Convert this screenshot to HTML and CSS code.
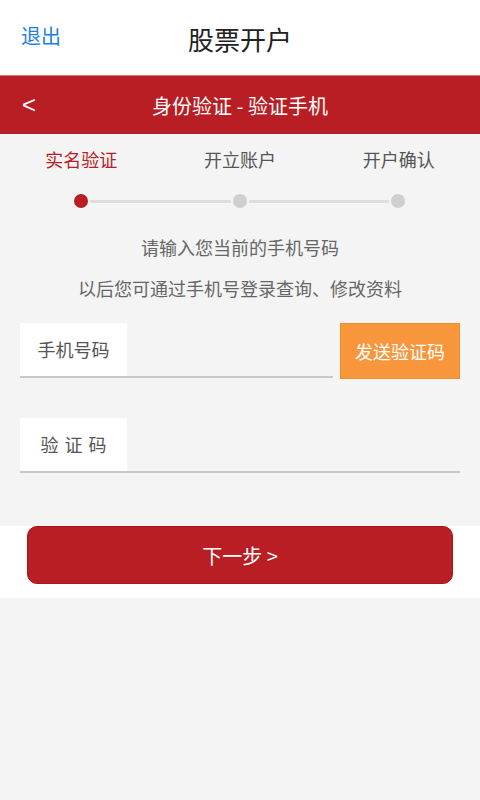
FILE: index.html
```html
<!DOCTYPE html>
<html lang="zh-CN">
<head>
  <meta charset="UTF-8" />
  <meta name="viewport" content="width=device-width, initial-scale=1.0"/>
  <title>股票开户</title>
  <link rel="stylesheet" href="styles.css">
</head>
<body>
  <header class="top-bar">
    <a class="exit">退出</a>
    <h1>股票开户</h1>
    <span></span>
  </header>

  <div class="nav-bar">
    <span class="back">&lt;</span>
    <h2>身份验证 - 验证手机</h2>
  </div>

  <div class="steps">
    <div class="step active">实名验证</div>
    <div class="step">开立账户</div>
    <div class="step">开户确认</div>
  </div>

  <div class="track">
    <span class="dot active"></span>
    <span class="line"></span>
    <span class="dot"></span>
    <span class="line"></span>
    <span class="dot"></span>
  </div>

  <div class="intro">
    <p>请输入您当前的手机号码</p>
    <p>以后您可通过手机号登录查询、修改资料</p>
  </div>

  <div class="form">
    <div class="row">
      <div class="field">
        <label for="phone">手机号码</label>
        <input id="phone" type="tel" />
      </div>
      <button class="send">发送验证码</button>
    </div>
    <div class="row second">
      <div class="field">
        <label for="code" class="spaced">验证码</label>
        <input id="code" type="text" />
      </div>
    </div>
  </div>

  <div class="footer">
    <button class="next">下一步 &gt;</button>
  </div>
</body>
</html>
```

FILE: styles.css
```css
body {
  margin: 0;
  background: #f4f4f4;
  font-family: "Noto Sans CJK SC", "Noto Sans", sans-serif;
}

.top-bar {
  height: 75px;
  background: #fff;
  display: grid;
  grid-template-columns: 1fr auto 1fr;
  align-items: start;
}

.exit {
  color: #1d7fe0;
  font-size: 20px;
  padding: 21px 0 0 21px;
  line-height: 30px;
}

.top-bar h1 {
  margin: 0;
  padding-top: 22px;
  font-size: 26px;
  font-weight: normal;
  line-height: 34px;
  color: #222;
}

.nav-bar {
  height: 58px;
  background: #b81e23;
  border-top: 1px solid #d67b7e;
  display: flex;
  align-items: center;
  position: relative;
}

.back {
  position: absolute;
  left: 22px;
  color: #fff;
  font-size: 24px;
  font-family: "Liberation Sans", sans-serif;
}

.nav-bar h2 {
  margin: 0 auto;
  font-size: 20px;
  font-weight: normal;
  color: #fff;
}

.steps {
  display: grid;
  grid-template-columns: repeat(3, 1fr);
  padding: 12px 2px 0;
}

.step {
  text-align: center;
  font-size: 18px;
  line-height: 26px;
  color: #555;
}

.step.active {
  color: #b81e23;
}

.track {
  display: flex;
  align-items: center;
  padding: 22px 75px 0 74px;
}

.dot {
  width: 14px;
  height: 14px;
  border-radius: 50%;
  background: #cfcfcf;
}

.dot.active {
  background: #b81e23;
}

.line {
  flex: 1;
  height: 3px;
  margin: 0 2px;
  background: #dedede;
}

.intro {
  text-align: center;
  color: #666;
  font-size: 18px;
  padding-top: 19px;
}

.intro p {
  margin: 0;
  line-height: 41px;
}

.form {
  padding: 14px 20px 0;
}

.row {
  display: flex;
  align-items: flex-start;
}

.row.second {
  margin-top: 39px;
}

.field {
  flex: 1;
  display: flex;
  border-bottom: 2px solid #c8c8c8;
}

.field label {
  width: 107px;
  height: 53px;
  background: #fff;
  color: #555;
  font-size: 18px;
  line-height: 53px;
  text-align: center;
}

.field label.spaced {
  letter-spacing: 6px;
  padding-left: 6px;
  box-sizing: border-box;
}

.field input {
  flex: 1;
  min-width: 0;
  border: none;
  background: transparent;
  outline: none;
}

.send {
  width: 120px;
  height: 56px;
  margin-left: 7px;
  background: #f8963b;
  border: 1px solid #f58b28;
  color: #fff;
  font-family: inherit;
  font-size: 18px;
  padding: 0;
}

.footer {
  margin-top: 53px;
  background: #fff;
  padding: 0 27px 14px;
}

.next {
  display: block;
  width: 100%;
  height: 58px;
  background: #b81e23;
  border: 1px solid #a8161b;
  border-radius: 10px;
  color: #fff;
  font-family: inherit;
  font-size: 20px;
}
```
